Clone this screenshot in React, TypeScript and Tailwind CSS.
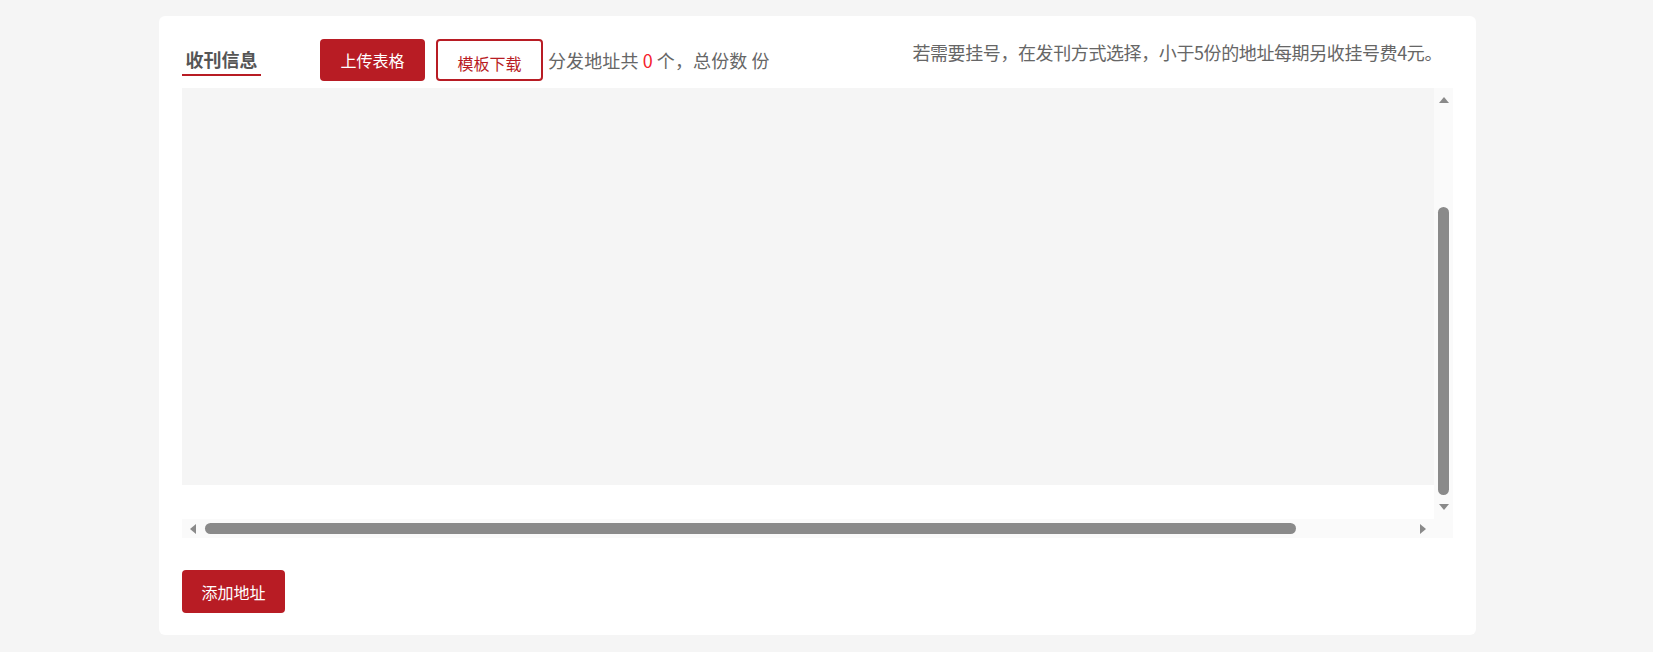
import React from "react";

function TriUp() {
  return (
    <svg width="10" height="6" viewBox="0 0 10 6" className="block">
      <polygon points="5,0 10,6 0,6" fill="#8a8a8a" />
    </svg>
  );
}
function TriDown() {
  return (
    <svg width="10" height="6" viewBox="0 0 10 6" className="block">
      <polygon points="0,0 10,0 5,6" fill="#8a8a8a" />
    </svg>
  );
}
function TriLeft() {
  return (
    <svg width="6" height="10" viewBox="0 0 6 10" className="block">
      <polygon points="6,0 6,10 0,5" fill="#8a8a8a" />
    </svg>
  );
}
function TriRight() {
  return (
    <svg width="6" height="10" viewBox="0 0 6 10" className="block">
      <polygon points="0,0 6,5 0,10" fill="#8a8a8a" />
    </svg>
  );
}

export default function App() {
  return (
    <div
      className="min-h-screen w-full bg-[#f5f5f5] pt-[16px] pb-[17px]"
      style={{ fontFamily: '"Noto Sans CJK SC", "Noto Sans", sans-serif' }}
    >
      <div className="ml-[159px] w-[1317px] rounded-[6px] bg-white px-[23px] pt-[23px] pb-[22px]">
        {/* header */}
        <div className="flex h-[42px] items-start">
          <div className="mt-[8px] w-[79px] border-b-2 border-[#b81c24] pb-[3px] text-center text-[18px] leading-[24px] font-bold text-[#555555]">
            收刊信息
          </div>
          <button className="ml-[59px] flex h-[42px] w-[105px] items-center justify-center rounded-[4px] bg-[#b81c24] text-[16px] leading-[20px] text-white">
            上传表格
          </button>
          <button className="ml-[11px] flex h-[42px] w-[107px] items-center justify-center rounded-[4px] border-2 border-[#b81c24] bg-white pt-[6px] text-[16px] leading-[20px] text-[#b81c24]">
            模板下载
          </button>
          <div className="ml-[5px] mt-[9px] text-[18px] leading-[24px] tracking-[0.1px] text-[#666666]">
            分发地址共 <span className="text-[#f5222d]">0</span> 个，总份数 份
          </div>
          <div className="ml-auto mr-[11px] mt-[1px] text-[18px] leading-[24px] tracking-[-0.4px] text-[#666666]">
            若需要挂号，在发刊方式选择，小于5份的地址每期另收挂号费4元。
          </div>
        </div>

        {/* scroll area */}
        <div className="mt-[7px] flex flex-col">
          <div className="flex h-[431px]">
            <div className="flex flex-1 flex-col bg-white">
              <div className="h-[397px] w-full bg-[#f5f5f5]" />
            </div>
            <div className="flex w-[19px] flex-col items-center bg-[#fafafa]">
              <div className="mt-[9px]">
                <TriUp />
              </div>
              <div className="mt-[104px] h-[288px] w-[11px] rounded-full bg-[#8a8a8a]" />
              <div className="mt-[9px]">
                <TriDown />
              </div>
            </div>
          </div>
          <div className="flex h-[19px] items-center bg-[#fafafa] pl-[8px] pr-[27px]">
            <TriLeft />
            <div className="ml-[9px] h-[11px] w-[1091px] rounded-full bg-[#8a8a8a]" />
            <div className="flex-1" />
            <TriRight />
          </div>
        </div>

        {/* add button */}
        <button className="mt-[32px] flex h-[43px] w-[103px] items-center justify-center rounded-[4px] bg-[#b81c24] text-[16px] leading-[20px] text-white">
          添加地址
        </button>
      </div>
    </div>
  );
}
